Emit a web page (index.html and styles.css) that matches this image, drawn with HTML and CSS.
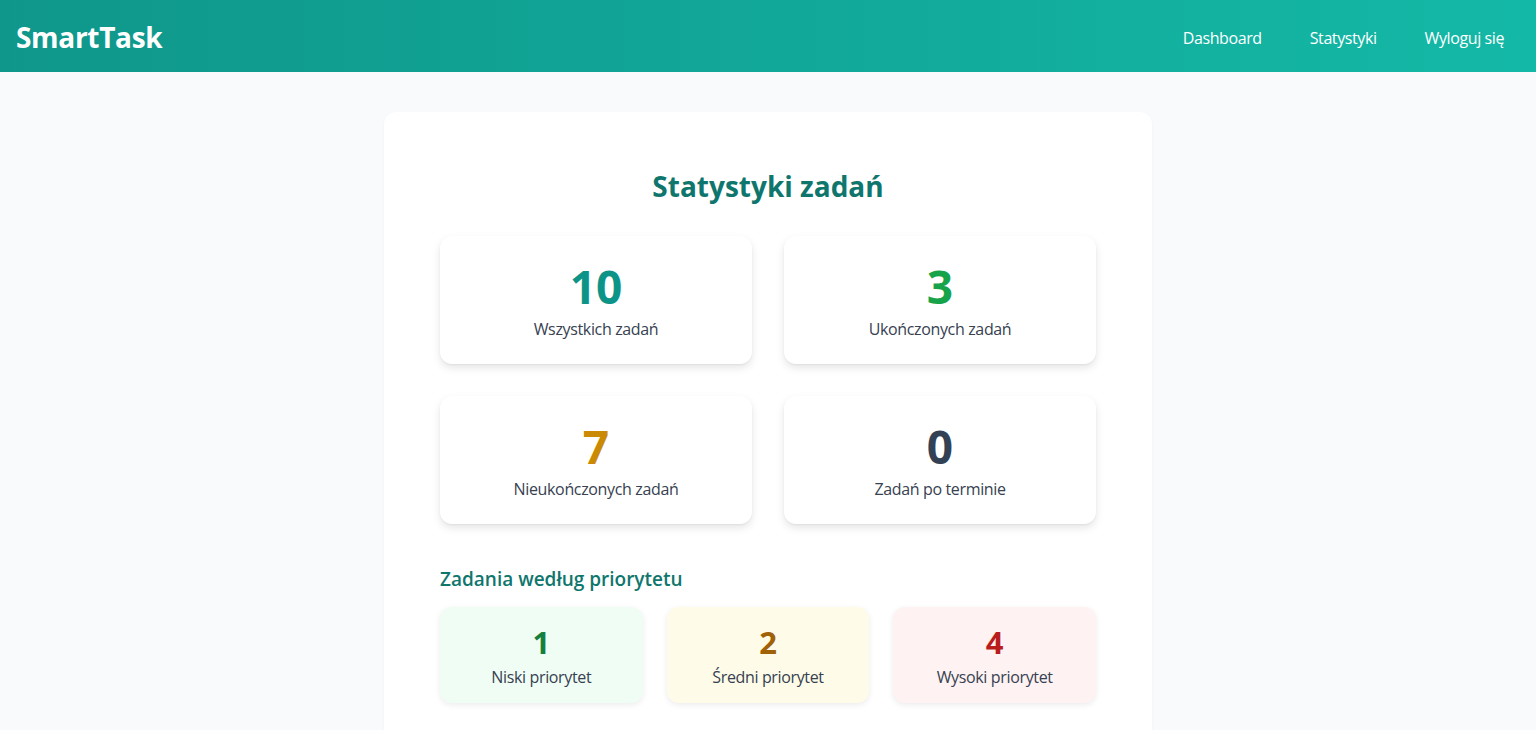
FILE: index.html
```html
<!DOCTYPE html>
<html lang="pl">
<head>
<meta charset="utf-8">
<title>SmartTask - Statystyki</title>
<link rel="stylesheet" href="styles.css">
</head>
<body>
<header class="topbar">
  <div class="logo">SmartTask</div>
  <nav class="nav">
    <a href="#">Dashboard</a>
    <a href="#">Statystyki</a>
    <a href="#">Wyloguj się</a>
  </nav>
</header>
<main class="page">
  <section class="panel">
    <h1 class="title">Statystyki zadań</h1>
    <div class="stats">
      <div class="stat">
        <div class="num teal">10</div>
        <div class="label">Wszystkich zadań</div>
      </div>
      <div class="stat">
        <div class="num green">3</div>
        <div class="label">Ukończonych zadań</div>
      </div>
      <div class="stat">
        <div class="num amber">7</div>
        <div class="label">Nieukończonych zadań</div>
      </div>
      <div class="stat">
        <div class="num slate">0</div>
        <div class="label">Zadań po terminie</div>
      </div>
    </div>
    <h2 class="subtitle">Zadania według priorytetu</h2>
    <div class="prios">
      <div class="prio low">
        <div class="pnum">1</div>
        <div class="label">Niski priorytet</div>
      </div>
      <div class="prio mid">
        <div class="pnum">2</div>
        <div class="label">Średni priorytet</div>
      </div>
      <div class="prio high">
        <div class="pnum">4</div>
        <div class="label">Wysoki priorytet</div>
      </div>
    </div>
  </section>
</main>
</body>
</html>
```
FILE: styles.css
```css
* { box-sizing: border-box; }
html, body { margin: 0; padding: 0; }
body {
  font-family: "Open Sans", "Noto Sans", sans-serif;
  background: #f8fafc;
  color: #374151;
}
.topbar {
  height: 72px;
  display: flex;
  align-items: center;
  justify-content: space-between;
  padding: 0 32px 0 16px;
  background: linear-gradient(90deg, #0f978b 0%, #14b8a6 100%);
  color: #fff;
}
.logo {
  font-size: 28px;
  font-weight: 700;
  letter-spacing: -0.3px;
  margin-top: 2px;
}
.nav {
  display: flex;
  gap: 48px;
  margin-top: 4px;
}
.nav a {
  color: #fff;
  text-decoration: none;
  font-size: 16px;
  letter-spacing: -0.4px;
}
.page {
  display: flex;
  justify-content: center;
  padding-top: 40px;
}
.panel {
  width: 768px;
  background: #fff;
  border-radius: 12px;
  box-shadow: 0 1px 3px rgba(0,0,0,0.04);
  padding: 54px 56px 40px;
}
.title {
  margin: 0 0 30px;
  text-align: center;
  font-size: 28px;
  font-weight: 700;
  color: #0f766e;
  line-height: 40px;
}
.stats {
  display: grid;
  grid-template-columns: 1fr 1fr;
  gap: 32px;
}
.stat {
  height: 128px;
  background: #fff;
  border-radius: 12px;
  box-shadow: 0 4px 8px rgba(0,0,0,0.10), 0 1px 2px rgba(0,0,0,0.05);
  display: flex;
  flex-direction: column;
  align-items: center;
  padding-top: 22px;
}
.num {
  font-size: 46px;
  font-weight: 700;
  line-height: 56px;
}
.stat .label { margin-top: 3px; }
.teal { color: #0d9488; }
.green { color: #16a34a; }
.amber { color: #ca8a04; }
.slate { color: #334155; }
.label {
  font-size: 16px;
  line-height: 24px;
  letter-spacing: -0.35px;
  color: #374151;
}
.subtitle {
  margin: 42px 0 15px;
  font-size: 19px;
  font-weight: 600;
  color: #0f766e;
  line-height: 26px;
}
.prios {
  display: grid;
  grid-template-columns: 1fr 1fr 1fr;
  gap: 24px;
}
.prio {
  height: 96px;
  border-radius: 12px;
  box-shadow: 0 2px 6px rgba(0,0,0,0.08);
  display: flex;
  flex-direction: column;
  align-items: center;
  padding-top: 16px;
}
.pnum {
  font-size: 31px;
  font-weight: 700;
  line-height: 38px;
}
.prio .label { margin-top: 4px; }
.low { background: #f0fdf4; }
.low .pnum { color: #15803d; }
.mid { background: #fefce8; }
.mid .pnum { color: #a16207; }
.high { background: #fef2f2; }
.high .pnum { color: #b91c1c; }
```
